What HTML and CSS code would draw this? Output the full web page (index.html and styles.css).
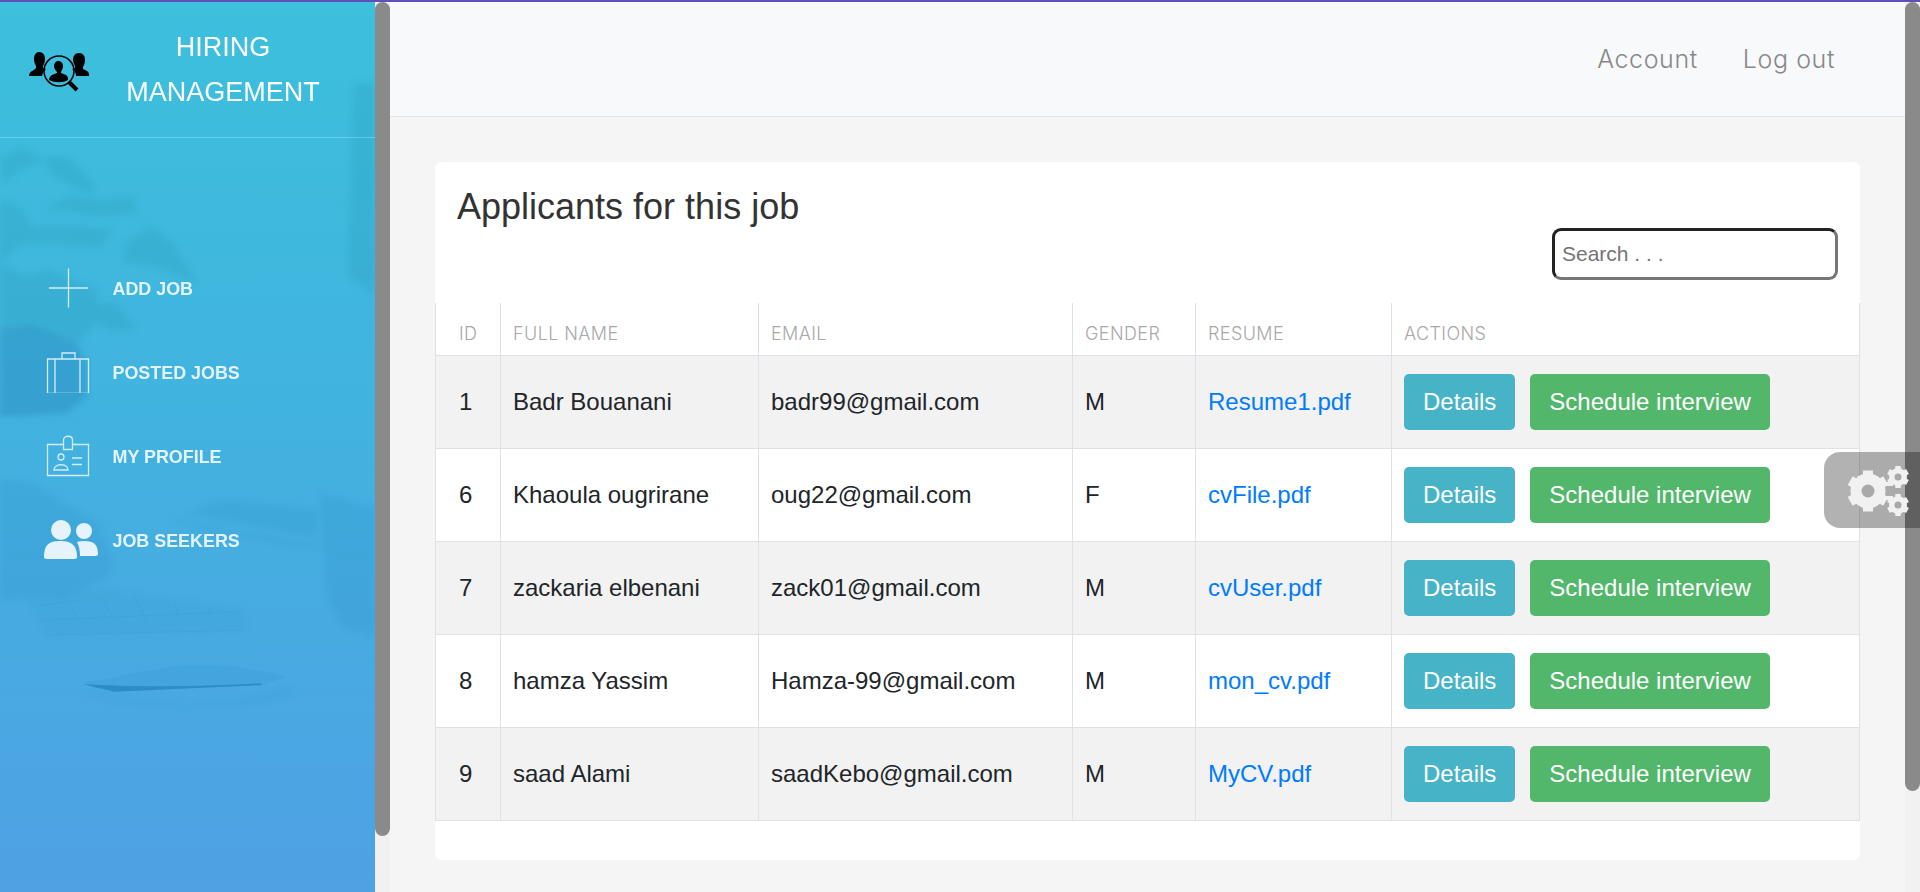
FILE: index.html
```html
<!DOCTYPE html>
<html>
<head>
  <meta charset="utf-8">
  <title>Hiring Management</title>
  <link rel="stylesheet" href="styles.css">
</head>
<body>
  <div class="top-strip"></div>
  <div class="page">

    <!-- left sidebar -->
    <aside class="sidebar">
      <svg class="sidebar-photo" viewBox="0 0 375 890">
        <!-- plant and pot -->
        <g class="photo-soft" transform="translate(0,128) scale(.3333)">
          <path class="tone-a" d="M1060 -140H1125V490L1045 440z"/>
          <path class="tone-a" d="M0 90L60 50 130 90 60 120 10 160z"/>
          <path class="tone-a" d="M130 80L200 80 280 160 280 195 220 170 150 130z"/>
          <path class="tone-a" d="M130 240L210 200 310 210 400 200 410 250 300 260 200 240z"/>
          <path class="tone-a" d="M0 210L60 230 100 290 250 290 340 300 300 350 150 340 60 340 0 400z"/>
          <path class="tone-a" d="M380 340L450 290 520 340 590 460 500 420 420 400 370 400z"/>
          <path class="tone-a" d="M280 520L350 520 410 600 330 600 280 570z"/>
          <path class="tone-a" d="M0 400L80 440 140 420 290 480 280 590 230 640 100 600 0 580z"/>
          <path class="tone-b" d="M0 590L100 590 230 640 260 700 260 800 200 850 0 860z"/>
        </g>
        <!-- hand, keyboard, tablet, cup, mouse -->
        <g class="photo-soft" transform="translate(0,428) scale(.3333)">
          <path class="tone-c" d="M0 150L100 160 190 220 295 280 300 310 340 395 320 440 260 470 200 500 0 510z"/>
          <path class="tone-d" d="M80 510L280 470 400 490 730 540 740 600 140 620z"/>
          <path class="tone-c" d="M560 250L680 210 950 240 950 320z"/>
          <path class="tone-c" d="M500 260L620 290 950 345V358L620 300z"/>
          <path class="tone-c" d="M960 190L1125 235V620L1030 590 980 500z"/>
          <path class="tone-d" d="M270 780C400 830 700 840 860 770L880 790C720 850 400 850 270 790z"/>
        </g>
        <g class="photo-keys" transform="translate(0,428) scale(.3333)">
          <path d="M100 530L240 510M125 570L720 545M140 615L735 600M205 515L245 585M300 500L345 575M400 490L440 570M525 520L535 560M625 530L635 555"/>
        </g>
        <g class="photo-edge" transform="translate(0,428) scale(.3333)">
          <path class="photo-mouse" d="M230 750C300 770 420 705 600 705 700 705 800 725 860 740L790 765 340 785z"/>
          <path class="photo-deep" d="M250 762C290 775 330 780 340 785L790 765 780 760C620 770 400 772 250 762z"/>
        </g>
      </svg>

      <div class="brand">
        <svg class="brand-logo" viewBox="0 0 60 40">
          <path d="M10 0c4 0 6 3 6 7 0 3-1 5-2 7v2l3 1c-3 3-4 6-4 7H0c0-3 2-5 5-6l2-2v-2C6 12 5 10 5 7c0-4 2-7 5-7z"/>
          <path d="M50 1c4 0 6 3 6 7 0 3-1 5-2 7v2l4 2c2 1 2 3 2 5H47c0-3-1-5-4-7l3-1v-2c-1-2-2-4-2-6 0-4 2-7 6-7z"/>
          <circle class="brand-lens" cx="30" cy="19" r="15"/>
          <path d="M29 9c3 0 5 2 5 5 0 2-1 4-2 6v1l5 2c2 1 2 3 2 5-5 3-13 3-19 0 0-2 1-4 3-5l5-2v-1c-2-2-3-4-3-6 0-3 2-5 4-5z"/>
          <path class="brand-handle" d="M40 30l8 8"/>
        </svg>
        <div class="brand-title">HIRING MANAGEMENT</div>
      </div>

      <nav class="side-nav">
        <a class="side-link" href="#">
          <svg class="side-icon" viewBox="0 0 54 42">
            <path class="line" d="M5 21h39M24.500 1.500v39"/>
          </svg>
          <span>Add job</span>
        </a>
        <a class="side-link" href="#">
          <svg class="side-icon" viewBox="0 0 54 42">
            <path class="line" d="M3.500 8h41v34.500h-41zM18 8V2h13v6M11 8v34M36 8v34"/>
          </svg>
          <span>Posted jobs</span>
        </a>
        <a class="side-link" href="#">
          <svg class="side-icon" viewBox="0 0 54 42">
            <path class="line" d="M19 9.500H3.500v31h41v-31H29M19.500 14.500V5c0-5 9-5 9 0v9.500zM28 23h10M28 29.500h10M10 35c0-7 14-7 14 0z"/>
            <circle class="line" cx="17" cy="22" r="3"/>
          </svg>
          <span>My profile</span>
        </a>
        <a class="side-link" href="#">
          <svg class="side-icon" viewBox="0 0 54 42">
            <circle class="fill" cx="17" cy="11" r="10"/>
            <circle class="fill" cx="40" cy="12" r="8"/>
            <path class="fill" d="M0 38c0-13 6-16 16-16s17 3 17 16c0 1-1 2-3 2H3c-2 0-3-1-3-2z"/>
            <path class="fill" d="M33 23c3-1 5-1 8-1 8 0 13 3 13 13 0 1-1 2-3 2H36c0-6-1-10-3-14z"/>
          </svg>
          <span>Job seekers</span>
        </a>
      </nav>
    </aside>

    <div class="scrollbar">
      <div class="thumb thumb-side"></div>
    </div>

    <!-- main content -->
    <main class="main">
      <header class="navbar">
        <a href="#">Account</a>
        <a href="#">Log out</a>
      </header>

      <section class="card">
        <div class="card-head">
          <h1>Applicants for this job</h1>
          <input class="search" type="text" placeholder="Search . . .">
        </div>

        <table class="applicants">
          <colgroup>
            <col class="col-id">
            <col class="col-name">
            <col class="col-email">
            <col class="col-gender">
            <col class="col-resume">
            <col>
          </colgroup>
          <tr>
            <th class="first">ID</th>
            <th>Full name</th>
            <th>Email</th>
            <th>Gender</th>
            <th>Resume</th>
            <th>Actions</th>
          </tr>
          <tr>
            <td class="first">1</td>
            <td>Badr Bouanani</td>
            <td>badr99@gmail.com</td>
            <td>M</td>
            <td><a href="#">Resume1.pdf</a></td>
            <td><a class="btn btn-info" href="#">Details</a><a class="btn btn-success" href="#">Schedule interview</a></td>
          </tr>
          <tr>
            <td class="first">6</td>
            <td>Khaoula ougrirane</td>
            <td>oug22@gmail.com</td>
            <td>F</td>
            <td><a href="#">cvFile.pdf</a></td>
            <td><a class="btn btn-info" href="#">Details</a><a class="btn btn-success" href="#">Schedule interview</a></td>
          </tr>
          <tr>
            <td class="first">7</td>
            <td>zackaria elbenani</td>
            <td>zack01@gmail.com</td>
            <td>M</td>
            <td><a href="#">cvUser.pdf</a></td>
            <td><a class="btn btn-info" href="#">Details</a><a class="btn btn-success" href="#">Schedule interview</a></td>
          </tr>
          <tr>
            <td class="first">8</td>
            <td>hamza Yassim</td>
            <td>Hamza-99@gmail.com</td>
            <td>M</td>
            <td><a href="#">mon_cv.pdf</a></td>
            <td><a class="btn btn-info" href="#">Details</a><a class="btn btn-success" href="#">Schedule interview</a></td>
          </tr>
          <tr>
            <td class="first">9</td>
            <td>saad Alami</td>
            <td>saadKebo@gmail.com</td>
            <td>M</td>
            <td><a href="#">MyCV.pdf</a></td>
            <td><a class="btn btn-info" href="#">Details</a><a class="btn btn-success" href="#">Schedule interview</a></td>
          </tr>
        </table>
      </section>
    </main>

    <div class="scrollbar">
      <div class="thumb thumb-main"></div>
    </div>
  </div>

  <!-- floating settings tab -->
  <div class="settings-tab">
    <svg viewBox="0 0 96 76">
      <path class="gear-link" d="M60 32h9M60 46h9"/>
      <g class="gear">
        <circle cx="44" cy="39" r="17.500"/>
        <path d="M44 39V18.500M44 39V59.500M44 39L26.200 28.700M44 39L61.800 28.700M44 39L26.200 49.300M44 39L61.800 49.300"/>
      </g>
      <circle class="gear-hole" cx="44" cy="39" r="6.500"/>
      <g class="gear gear-small">
        <circle cx="74" cy="25" r="9"/>
        <path d="M74 25V14M74 25V36M74 25L64.500 19.500M74 25L83.500 19.500M74 25L64.500 30.500M74 25L83.500 30.500"/>
      </g>
      <circle class="gear-hole" cx="74" cy="25" r="3.500"/>
      <g class="gear gear-small">
        <circle cx="74" cy="53" r="9"/>
        <path d="M74 53V42M74 53V64M74 53L64.500 47.500M74 53L83.500 47.500M74 53L64.500 58.500M74 53L83.500 58.500"/>
      </g>
      <circle class="gear-hole" cx="74" cy="53" r="3.500"/>
    </svg>
  </div>
</body>
</html>
```

FILE: styles.css
```css
/* page frame */
html, body {
  margin: 0;
  height: 892px;
  overflow: hidden;
}
body {
  font-family: "Liberation Sans", Arial, sans-serif;
  color: #212529;
  background: #f5f5f5;
}
a {
  text-decoration: none;
}
.top-strip {
  height: 2px;
  background: #5f4fb8;
}
.page {
  display: flex;
  height: 890px;
}

/* sidebar */
.sidebar {
  position: relative;
  width: 375px;
  flex: none;
  overflow: hidden;
  background: linear-gradient(180deg, #3cc0dc 0%, #41b3df 45%, #4fa1e4 100%);
}
.sidebar-photo {
  position: absolute;
  top: 0;
  left: 0;
  width: 375px;
  height: 890px;
}
.photo-soft {
  filter: blur(9px);
}
.photo-keys {
  fill: none;
  stroke: #1f86c0;
  stroke-width: 3;
  opacity: .1;
  filter: blur(2px);
}
.photo-edge {
  filter: blur(2px);
}
.tone-a {
  fill: #1f93a8;
  opacity: .2;
}
.tone-b {
  fill: #1d78b0;
  opacity: .3;
}
.tone-c {
  fill: #1f7fb8;
  opacity: .14;
}
.tone-d {
  fill: #1f8fc0;
  opacity: .09;
}
.photo-mouse {
  fill: #1f86bd;
  opacity: .1;
}
.photo-deep {
  fill: #1a78b0;
  opacity: .55;
}
.brand {
  position: relative;
  display: flex;
  align-items: flex-start;
  height: 112px;
  padding: 23px 18px 0 29px;
  border-bottom: 1px solid rgba(255, 255, 255, .25);
}
.brand-logo {
  width: 60px;
  height: 40px;
  margin-top: 27px;
  flex: none;
  fill: #000;
}
.brand-lens {
  fill: none;
  stroke: #000;
  stroke-width: 1.500;
}
.brand-handle {
  fill: none;
  stroke: #000;
  stroke-width: 4;
}
.brand-title {
  flex: 1;
  color: #fff;
  font-size: 27px;
  line-height: 45px;
  text-align: center;
}
.side-nav {
  position: relative;
  display: flex;
  flex-direction: column;
  padding: 108px 0 0 44px;
}
.side-link {
  display: flex;
  align-items: center;
  gap: 14.500px;
  height: 84px;
  color: #e4f3fb;
  font-size: 17.900px;
  font-weight: bold;
  text-transform: uppercase;
}
.side-link span {
  padding-top: 2px;
}
.side-icon {
  width: 54px;
  height: 42px;
  flex: none;
}
.side-icon .line {
  fill: none;
  stroke: #d3edf8;
  stroke-width: 1.300;
}
.side-icon .fill {
  fill: #e6f3fb;
}

/* fake scrollbars, they are part of the shot */
.scrollbar {
  width: 15px;
  flex: none;
  background: #f1f1f1;
}
.thumb {
  background: #8a8a8a;
  border-radius: 8px;
}
.thumb-side {
  height: 834px;
}
.thumb-main {
  height: 789px;
}

/* main column */
.main {
  flex: 1;
  min-width: 0;
}
.navbar {
  display: flex;
  justify-content: flex-end;
  align-items: center;
  gap: 45px;
  height: 114px;
  padding-right: 70px;
  background: #f8f9fa;
  border-bottom: 1px solid #e3e4e6;
}
.navbar a {
  color: #888;
  font-family: Inter, "Liberation Sans", sans-serif;
  font-size: 25px;
  font-weight: 300;
  letter-spacing: .6px;
}
.card {
  margin: 45px 45px 0;
  padding-bottom: 39px;
  background: #fff;
  border-radius: 6px;
}
.card-head {
  display: flex;
  flex-direction: column;
  padding: 24px 22px 23px;
}
.card-head h1 {
  margin: 0;
  color: #333;
  font-size: 36px;
  font-weight: normal;
  line-height: 42px;
}
.search {
  align-self: flex-end;
  box-sizing: border-box;
  width: 286px;
  height: 52px;
  padding: 0 7px;
  border: 3px solid;
  border-color: #222 #767676 #767676 #222;
  border-radius: 9px;
  font-family: "Liberation Sans", Arial, sans-serif;
  font-size: 21px;
}
.search::placeholder {
  color: #757575;
}

/* table */
.applicants {
  width: 100%;
  table-layout: fixed;
  border-collapse: collapse;
}
.col-id { width: 65px; }
.col-name { width: 258px; }
.col-email { width: 314px; }
.col-gender { width: 123px; }
.col-resume { width: 196px; }
.applicants th, .applicants td {
  padding: 0 12px;
  border: 1px solid #dee2e6;
  text-align: left;
}
.applicants th {
  height: 44px;
  padding-top: 8px;
  border-top: none;
  color: #a9a9a9;
  font-family: Inter, "Liberation Sans", sans-serif;
  font-size: 18px;
  font-weight: 300;
  letter-spacing: .4px;
  text-transform: uppercase;
}
.applicants td {
  height: 92px;
  font-size: 24px;
}
.applicants .first {
  padding-left: 23px;
}
.applicants tr:nth-child(even) td {
  background: #f2f2f2;
}
.applicants a {
  color: #007bff;
}
.applicants .btn {
  display: inline-block;
  height: 56px;
  padding: 0 19px;
  border-radius: 5px;
  color: #fff;
  line-height: 56px;
}
.btn-info {
  background: #46b3c6;
  margin-right: 15px;
}
.btn-success {
  background: #52b76b;
}

/* settings tab */
.settings-tab {
  position: absolute;
  top: 452px;
  right: 0;
  width: 96px;
  height: 76px;
  border-radius: 16px 0 0 16px;
  background: rgba(0, 0, 0, .3);
}
.settings-tab svg {
  display: block;
  width: 96px;
  height: 76px;
}
.gear circle {
  fill: #f1f1f1;
}
.gear path {
  fill: none;
  stroke: #f1f1f1;
  stroke-width: 10;
}
.gear-small path {
  stroke-width: 5.500;
}
.gear-link {
  fill: none;
  stroke: #f1f1f1;
  stroke-width: 4;
}
.gear-hole {
  fill: #a9a9a9;
}
```
